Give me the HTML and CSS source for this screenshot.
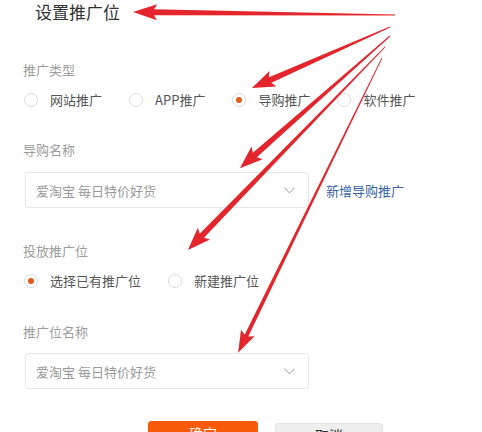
FILE: index.html
```html
<!DOCTYPE html>
<html lang="zh-CN">
<head>
<meta charset="utf-8">
<title>设置推广位</title>
<link rel="stylesheet" href="styles.css">
</head>
<body>
<div class="page">
  <h1 class="title">设置推广位</h1>

  <div class="label label-first">推广类型</div>
  <div class="radios">
    <label class="radio"><span class="circle"></span><span class="rtext">网站推广</span></label>
    <label class="radio"><span class="circle"></span><span class="rtext">APP推广</span></label>
    <label class="radio"><span class="circle checked"></span><span class="rtext">导购推广</span></label>
    <label class="radio"><span class="circle"></span><span class="rtext">软件推广</span></label>
  </div>

  <div class="label label-gap">导购名称</div>
  <div class="select-row">
    <div class="select">
      <span class="select-text">爱淘宝 每日特价好货</span>
      <svg class="chev" width="11" height="7" viewBox="0 0 11 7"><path d="M0.5 0.7 L5.5 5.8 L10.5 0.7" fill="none" stroke="#b5b5b5" stroke-width="1.1"/></svg>
    </div>
    <a class="link" href="#">新增导购推广</a>
  </div>

  <div class="label label-gap2">投放推广位</div>
  <div class="radios">
    <label class="radio"><span class="circle checked"></span><span class="rtext">选择已有推广位</span></label>
    <label class="radio"><span class="circle"></span><span class="rtext">新建推广位</span></label>
  </div>

  <div class="label label-gap3">推广位名称</div>
  <div class="select-row select-row2">
    <div class="select">
      <span class="select-text">爱淘宝 每日特价好货</span>
      <svg class="chev" width="11" height="7" viewBox="0 0 11 7"><path d="M0.5 0.7 L5.5 5.8 L10.5 0.7" fill="none" stroke="#b5b5b5" stroke-width="1.1"/></svg>
    </div>
  </div>

  <div class="buttons">
    <button class="btn btn-primary">确定</button>
    <button class="btn btn-default">取消</button>
  </div>
</div>

<svg class="arrows" width="482" height="432" viewBox="0 0 482 432">
  <g fill="#e4262c">
    <polygon transform="translate(395,15) rotate(180.66)" points="0,-0.5 241,-3 238,-8 262,0 238,8 241,3 0,0.5"/>
    <polygon transform="translate(390,27) rotate(156.15)" points="0,-0.5 131,-3 128,-8.5 151,0 128,8.5 131,3 0,0.5"/>
    <polygon transform="translate(390,36) rotate(138.65)" points="0,-0.5 180,-3 177,-8.5 200,0 177,8.5 180,3 0,0.5"/>
    <polygon transform="translate(385,47) rotate(134.14)" points="0,-0.5 263,-3 260,-8.5 283,0 260,8.5 263,3 0,0.5"/>
    <polygon transform="translate(382,58) rotate(116.02)" points="0,-0.4 309,-2 306,-7.5 328,0 306,7.5 309,2 0,0.4"/>
  </g>
</svg>
</body>
</html>
```

FILE: styles.css
```css
html, body {
  margin: 0;
  padding: 0;
  background: #ffffff;
  overflow: hidden;
  height: 432px;
}

body {
  position: relative;
  font-family: "Noto Sans CJK SC", "Noto Sans", "Liberation Sans", sans-serif;
  color: #555;
}

.page {
  padding-left: 23px;
}

.title {
  margin: 0 0 0 12px;
  font-size: 17px;
  font-weight: normal;
  line-height: 24px;
  color: #333;
}

.label {
  font-size: 13px;
  line-height: 20px;
  color: #9c9c9c;
}

.label-first { margin-top: 36px; }
.label-gap { margin-top: 30px; }
.label-gap2 { margin-top: 33px; }
.label-gap3 { margin-top: 31px; }

.radios {
  display: flex;
  gap: 27px;
  margin-top: 10px;
  margin-left: 1px;
  height: 20px;
  align-items: center;
}

.radio {
  display: flex;
  align-items: center;
  gap: 12px;
  font-size: 13px;
  line-height: 20px;
  color: #555;
}

.circle {
  width: 12px;
  height: 12px;
  border: 1px solid #dcdcdc;
  border-radius: 50%;
  display: flex;
  align-items: center;
  justify-content: center;
  background: #fff;
}

.circle.checked::after {
  content: "";
  width: 6px;
  height: 6px;
  border-radius: 50%;
  background: #e35b1c;
}

.select-row {
  display: flex;
  align-items: center;
  gap: 17px;
  margin-top: 12px;
  margin-left: 2px;
}

.select-row2 { margin-top: 11px; }

.select {
  box-sizing: border-box;
  width: 284px;
  height: 36px;
  border: 1px solid #e6e6e6;
  border-radius: 3px;
  display: flex;
  align-items: center;
  justify-content: space-between;
  padding: 0 13px 0 10px;
}

.select-text {
  font-size: 13px;
  color: #9a9a9a;
}

.chev {
  display: block;
}

.link {
  font-size: 13px;
  color: #36649f;
  text-decoration: none;
}

.buttons {
  display: flex;
  gap: 17px;
  margin-top: 32px;
  margin-left: 125px;
}

.btn {
  box-sizing: border-box;
  width: 110px;
  height: 36px;
  border-radius: 3px;
  font-family: "Noto Sans CJK SC", "Noto Sans", sans-serif;
  font-size: 14px;
  line-height: 22px;
  padding: 0;
  display: flex;
  align-items: flex-start;
  justify-content: center;
}

.btn-primary {
  background: #fa5a08;
  border: 1px solid #fa5a08;
  color: #fff;
}

.btn-default {
  width: 108px;
  margin-top: 2px;
  background: #eeeeee;
  border: 1px solid #e4e4e4;
  color: #333;
}

.arrows {
  position: absolute;
  left: 0;
  top: 0;
  pointer-events: none;
}
```
